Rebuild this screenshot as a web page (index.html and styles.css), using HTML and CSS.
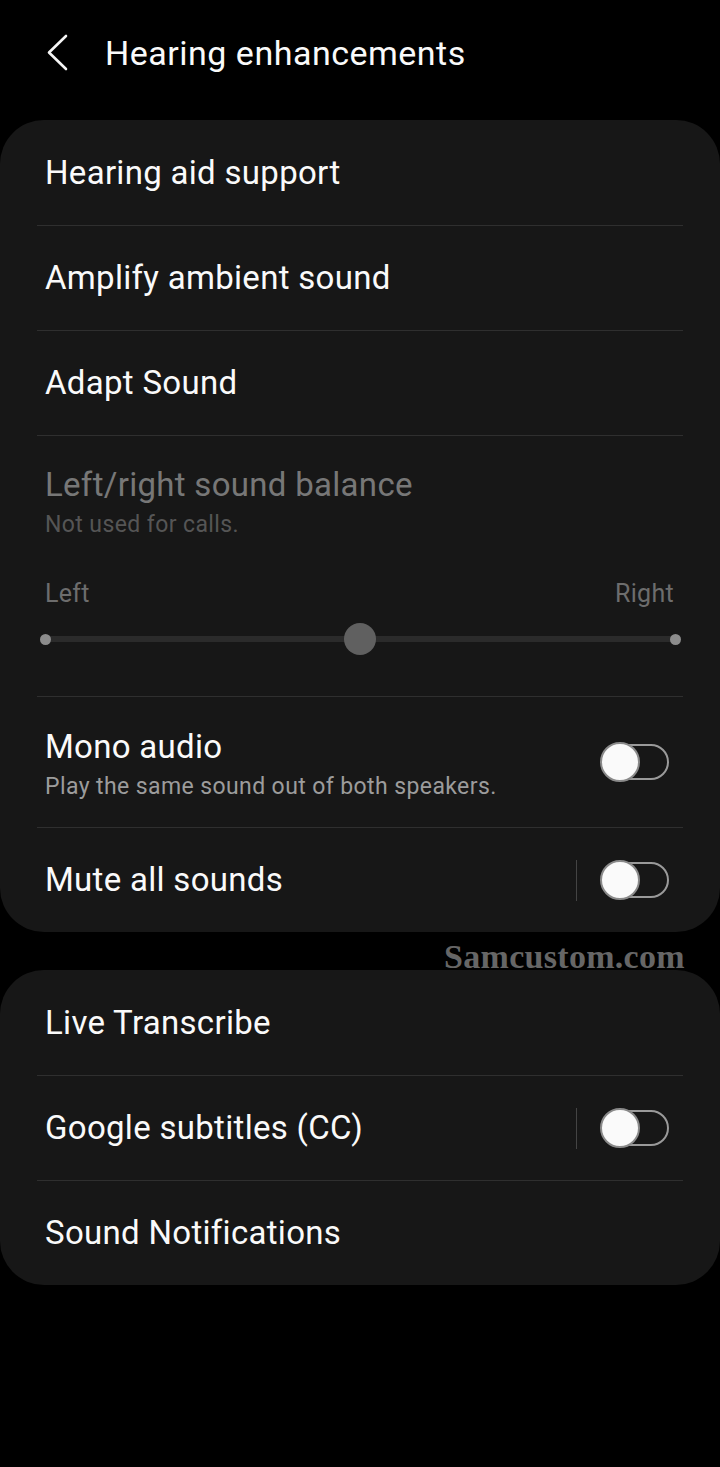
FILE: index.html
```html
<!DOCTYPE html>
<html>
  <head>
    <meta charset="UTF-8">
    <title>Hearing enhancements</title>
    <link rel="stylesheet" href="styles.css">
  </head>
  <body>
    <div class="page">
      <div class="top-bar">
        <svg class="back" width="24" height="40" viewBox="0 0 24 40">
          <path d="M20 3 L3 19.5 L20 36" fill="none" stroke="#f5f5f5" stroke-width="2.6" stroke-linecap="round" stroke-linejoin="round"/>
        </svg>
        <div class="page-title">Hearing enhancements</div>
      </div>

      <div class="card">
        <div class="row">
          <div class="row-title">Hearing aid support</div>
        </div>
        <div class="row">
          <div class="row-title">Amplify ambient sound</div>
        </div>
        <div class="row">
          <div class="row-title">Adapt Sound</div>
        </div>
        <!-- balance slider, disabled look -->
        <div class="row balance">
          <div class="row-title dim">Left/right sound balance</div>
          <div class="row-sub dimmer">Not used for calls.</div>
          <div class="balance-labels">
            <span>Left</span>
            <span>Right</span>
          </div>
          <div class="slider">
            <div class="slider-track"></div>
            <span class="slider-dot"></span>
            <span class="slider-thumb"></span>
            <span class="slider-dot"></span>
          </div>
        </div>
        <div class="row tall">
          <div class="row-text">
            <div class="row-title">Mono audio</div>
            <div class="row-sub">Play the same sound out of both speakers.</div>
          </div>
          <div class="switch"><span class="knob"></span></div>
        </div>
        <div class="row">
          <div class="row-title">Mute all sounds</div>
          <div class="vline"></div>
          <div class="switch"><span class="knob"></span></div>
        </div>
      </div>

      <div class="watermark">Samcustom.com</div>

      <div class="card">
        <div class="row">
          <div class="row-title">Live Transcribe</div>
        </div>
        <div class="row">
          <div class="row-title">Google subtitles (CC)</div>
          <div class="vline"></div>
          <div class="switch"><span class="knob"></span></div>
        </div>
        <div class="row">
          <div class="row-title">Sound Notifications</div>
        </div>
      </div>
    </div>
  </body>
</html>
```

FILE: styles.css
```css
body {
  margin: 0;
  background-color: #000;
  font-family: Roboto, "Noto Sans", sans-serif;
  color: #fafafa;
}

.page {
  position: relative;
  width: 720px;
  min-height: 1467px;
}

.top-bar {
  height: 120px;
  display: flex;
  align-items: center;
  padding-left: 46px;
  padding-bottom: 14px;
  box-sizing: border-box;
}

.back {
  display: block;
  margin-right: 35px;
}

.page-title {
  font-size: 34px;
  letter-spacing: 0.5px;
}

.card {
  background-color: #171717;
  border-radius: 44px;
  margin-bottom: 38px;
}

.row {
  height: 105px;
  margin: 0 37px;
  padding: 0 14px 0 8px;
  border-top: 1px solid #2f2f2f;
  display: flex;
  align-items: center;
  box-sizing: border-box;
}

.card .row:first-child {
  border-top: none;
}

.row.tall {
  height: 131px;
}

.row-text {
  flex: 1;
  padding-top: 4px;
}

.row-title {
  flex: 1;
  font-size: 33px;
  line-height: 38px;
  letter-spacing: 0.3px;
}

.row-sub {
  font-size: 23px;
  line-height: 28px;
  letter-spacing: 0.4px;
  color: #9c9c9c;
  margin-top: 7px;
}

.dim {
  color: #777;
  flex: none;
}

.dimmer {
  color: #555;
}

/* balance slider */
.row.balance {
  height: 261px;
  display: block;
  padding-top: 30px;
}

.balance-labels {
  display: flex;
  justify-content: space-between;
  font-size: 25px;
  letter-spacing: 0.3px;
  color: #6d6d6d;
  margin: 40px -5px 0 0;
}

.slider {
  position: relative;
  display: flex;
  justify-content: space-between;
  align-items: center;
  height: 34px;
  margin: 14px -11.5px 0 -5.5px;
}

.slider-track {
  position: absolute;
  left: 4px;
  right: 4px;
  top: 14px;
  height: 6px;
  background-color: #2b2b2b;
}

.slider-dot {
  position: relative;
  width: 11px;
  height: 11px;
  border-radius: 50%;
  background-color: #8c8c8c;
}

.slider-thumb {
  position: relative;
  width: 32px;
  height: 32px;
  border-radius: 50%;
  background-color: #606060;
}

/* switches */
.vline {
  width: 1px;
  height: 41px;
  background-color: #444;
  margin-right: 24px;
}

.switch {
  position: relative;
  width: 68px;
  height: 36px;
  border: 2px solid #9a9a9a;
  border-radius: 20px;
  box-sizing: border-box;
}

.knob {
  position: absolute;
  left: -3px;
  top: -4px;
  width: 40px;
  height: 40px;
  border-radius: 50%;
  background-color: #fafafa;
  border: 2px solid #8a8a8a;
  box-sizing: border-box;
}

.watermark {
  position: absolute;
  left: 444px;
  top: 938px;
  font-family: "Liberation Serif", serif;
  font-weight: bold;
  font-size: 34px;
  color: #666;
  letter-spacing: 0.3px;
}
```
